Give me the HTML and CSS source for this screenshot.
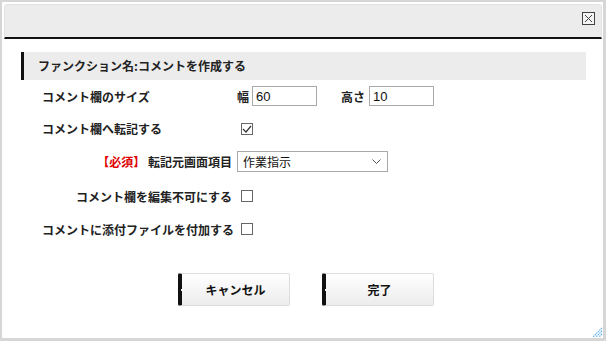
FILE: index.html
```html
<!DOCTYPE html>
<html lang="ja">
<head>
    <meta charset="UTF-8">
    <title>コメントを作成する</title>
    <link rel="stylesheet" href="styles.css">
</head>
<body>
    <div class="frame">
        <!-- Dialog Header -->
        <div class="dialog-header">
            <span class="close-btn">
                <svg width="13" height="13" viewBox="0 0 13 13">
                    <rect x="0.5" y="0.5" width="12" height="12" fill="#f4f4f4" stroke="#444"/>
                    <path d="M3 3 L10 10 M10 3 L3 10" stroke="#444" stroke-width="1"/>
                </svg>
            </span>
        </div>

        <!-- Function Title -->
        <div class="section-title">ファンクション名:コメントを作成する</div>

        <!-- Form -->
        <div class="form-grid">
            <div class="row row-size">
                <div class="label">コメント欄のサイズ</div>
                <div class="value">
                    <span class="unit">幅</span><input class="num-input" type="text" value="60">
                    <span class="unit unit-gap">高さ</span><input class="num-input" type="text" value="10">
                </div>
            </div>
            <div class="row row-copy">
                <div class="label">コメント欄へ転記する</div>
                <div class="value"><span class="checkbox checked"><svg width="10" height="10" viewBox="0 0 10 10"><path d="M1 5 L4 8 L9 2" fill="none" stroke="#333" stroke-width="1.2"/></svg></span></div>
            </div>
            <div class="row row-source">
                <div class="label label-right"><span class="required">【必須】</span> 転記元画面項目</div>
                <div class="value">
                    <div class="select-box">
                        <span>作業指示</span>
                        <svg width="9" height="6" viewBox="0 0 9 6"><path d="M0.5 0.5 L4.5 4.5 L8.5 0.5" fill="none" stroke="#555" stroke-width="1"/></svg>
                    </div>
                </div>
            </div>
            <div class="row row-lock">
                <div class="label label-right">コメント欄を編集不可にする</div>
                <div class="value"><span class="checkbox"></span></div>
            </div>
            <div class="row row-attach">
                <div class="label label-right">コメントに添付ファイルを付加する</div>
                <div class="value"><span class="checkbox"></span></div>
            </div>
        </div>

        <!-- Buttons -->
        <div class="button-bar">
            <button class="btn">キャンセル</button>
            <button class="btn">完了</button>
        </div>

        <!-- Resize grip -->
        <svg class="resize-grip" width="11" height="11" viewBox="0 0 11 11">
            <path d="M10 1 L1 10 M10 4 L4 10 M10 7 L7 10" stroke="#5aaee8" stroke-width="1.2" stroke-dasharray="1.4 0.8"/>
        </svg>
    </div>
</body>
</html>
```

FILE: styles.css
```css
:root {
    --color-frame: #d6d6d6;
    --color-header: #ececec;
    --color-text: #222;
    --color-required: #e00000;
    --font-jp: "Noto Sans CJK JP", "Noto Sans", sans-serif;
}

html, body {
    margin: 0;
    padding: 0;
    background: #fff;
}

body {
    font-family: var(--font-jp);
    font-size: 12px;
    color: var(--color-text);
}

/* Outer frame */
.frame {
    position: relative;
    width: 606px;
    height: 341px;
    box-sizing: border-box;
    border: 2px solid var(--color-frame);
    border-right-width: 3px;
    border-bottom-width: 3px;
    padding: 2px 1px 0 2px;
}

/* Dialog Header */
.dialog-header {
    height: 35px;
    box-sizing: border-box;
    background: var(--color-header);
    border: 1px solid #e2e2e2;
    border-bottom: 2px solid #111;
    border-radius: 4px 4px 0 0;
    display: flex;
    justify-content: flex-end;
    align-items: flex-start;
    padding: 7px 6px 0 0;
}

.close-btn {
    display: block;
    width: 13px;
    height: 13px;
}

.close-btn svg {
    display: block;
}

/* Function Title */
.section-title {
    margin: 13px 16px 0 17px;
    height: 28px;
    line-height: 28px;
    background: var(--color-header);
    border-left: 3px solid #111;
    padding-left: 14px;
    font-weight: bold;
    font-size: 12px;
}

/* Form */
.form-grid {
    padding-left: 38px;
}

.row {
    display: flex;
    align-items: center;
    height: 33px;
}

.row-size {
    height: 32px;
}

.row-lock {
    height: 36px;
}

.row-attach {
    height: 30px;
}

.label {
    width: 190px;
    font-weight: bold;
    white-space: nowrap;
}

.label-right {
    text-align: right;
}

.required {
    color: var(--color-required);
}

.value {
    display: flex;
    align-items: center;
    padding-left: 5px;
}

.unit {
    font-weight: bold;
    margin-right: 3px;
}

.unit-gap {
    margin-left: 24px;
    margin-right: 4px;
}

.num-input {
    width: 65px;
    height: 20px;
    box-sizing: border-box;
    border: 1px solid #a9a9a9;
    padding: 0 3px;
    font-family: "Liberation Sans", sans-serif;
    font-size: 13px;
    color: #111;
    outline: none;
}

.checkbox {
    display: flex;
    align-items: center;
    justify-content: center;
    width: 12px;
    height: 12px;
    box-sizing: border-box;
    border: 1px solid #666;
    margin-left: 4px;
    background: #fff;
}

.checkbox svg {
    display: block;
}

.select-box {
    width: 151px;
    height: 21px;
    box-sizing: border-box;
    border: 1px solid #a9a9a9;
    display: flex;
    align-items: center;
    justify-content: space-between;
    padding: 0 6px 0 5px;
    font-size: 12px;
    color: #111;
}

/* Buttons */
.button-bar {
    display: flex;
    justify-content: center;
    gap: 32px;
    margin-top: 29px;
    padding-left: 6px;
}

.btn {
    position: relative;
    width: 112px;
    height: 33px;
    font-family: var(--font-jp);
    font-size: 12px;
    font-weight: bold;
    color: #111;
    background: linear-gradient(#ffffff, #ececec);
    border: 1px solid #dcdcdc;
    border-left: 4px solid #111;
    border-radius: 2px;
    cursor: pointer;
}

.btn::before {
    content: "";
    position: absolute;
    left: -1px;
    top: 50%;
    width: 1px;
    height: 2px;
    margin-top: -1px;
    background: #fff;
}

/* Resize grip */
.resize-grip {
    position: absolute;
    right: 0;
    bottom: 0;
}
```
